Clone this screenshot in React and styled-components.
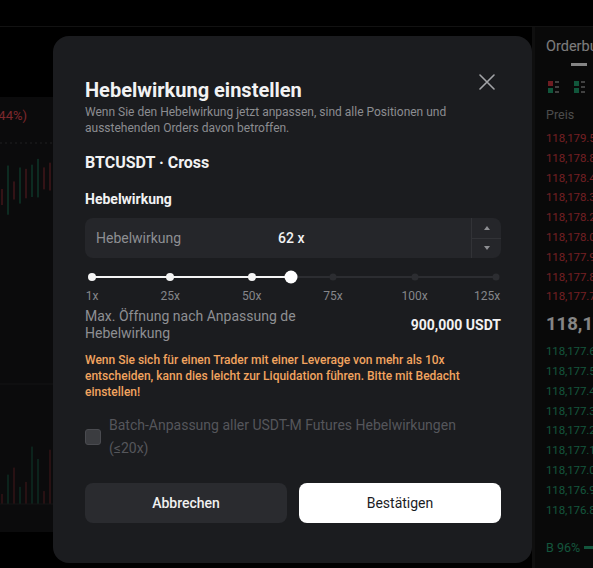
import React from 'react'
import styled, { createGlobalStyle } from 'styled-components'

const GlobalStyle = createGlobalStyle`
  html, body {
    margin: 0;
    padding: 0;
    background: #000;
  }
  body {
    font-family: Roboto, "Noto Sans", "Liberation Sans", sans-serif;
  }
  * {
    box-sizing: border-box;
  }
`

const marks = [1, 25, 50, 75, 100, 125]
const leverage = 62
const pct = v => ((v - 1) / 124) * 100

const asks = [
  '118,179.5',
  '118,178.8',
  '118,178.4',
  '118,178.3',
  '118,178.2',
  '118,178.0',
  '118,177.9',
  '118,177.8',
  '118,177.7'
]
const bids = [
  '118,177.6',
  '118,177.5',
  '118,177.4',
  '118,177.3',
  '118,177.2',
  '118,177.1',
  '118,177.0',
  '118,176.9',
  '118,176.8'
]

// simple deterministic candles for the chart behind the dialog
const candles = Array.from({ length: 90 }, (_, i) => {
  const s = Math.sin(i * 12.9898) * 43758.5453
  const r = s - Math.floor(s)
  const base = 200 - Math.sin(i / 6) * 18 - i * 0.2
  return {
    x: 2 + i * 6,
    top: base - 10 - r * 22,
    bottom: base + 6 + r * 14,
    up: r > 0.45,
    vol: 10 + ((r * 97) % 1) * 48
  }
})

const Chart = () => (
  <svg width="532" height="434" viewBox="0 0 532 434">
    <line x1="0" y1="46" x2="532" y2="46" stroke="#3a3a3a" strokeDasharray="2 3" />
    {candles.map((c, i) => (
      <g key={i}>
        <line
          x1={c.x}
          x2={c.x}
          y1={c.top - 98}
          y2={c.bottom - 98}
          stroke={c.up ? '#1f8a64' : '#a8353c'}
          strokeWidth="1"
        />
        <line
          x1={c.x}
          x2={c.x}
          y1={407 - c.vol}
          y2={407}
          stroke={c.up ? '#1a6e50' : '#7e2a30'}
          strokeWidth="1"
        />
      </g>
    ))}
    <line x1="0" y1="287" x2="532" y2="287" stroke="#262626" />
    <line x1="0" y1="407" x2="532" y2="407" stroke="#262626" />
  </svg>
)

const BookIcon = ({ mixed }) => (
  <svg width="11" height="12" viewBox="0 0 11 12">
    <rect x="0" y="0" width="5" height="5" fill={mixed ? '#c9363e' : '#1f9d6c'} />
    <rect x="0" y="7" width="5" height="5" fill="#1f9d6c" />
    <rect x="7" y="0" width="4" height="2" fill="#777" />
    <rect x="7" y="5" width="4" height="2" fill="#777" />
    <rect x="7" y="10" width="4" height="2" fill="#777" />
  </svg>
)

const CloseIcon = () => (
  <svg width="16" height="16" viewBox="0 0 16 16">
    <path d="M1 1 L15 15 M15 1 L1 15" stroke="#a3a4a7" strokeWidth="1.6" strokeLinecap="round" />
  </svg>
)

const Arrow = ({ down }) => (
  <svg width="6" height="4" viewBox="0 0 6 4">
    <path d={down ? 'M0 0 L6 0 L3 4 Z' : 'M0 4 L6 4 L3 0 Z'} fill="#8d8e92" />
  </svg>
)

export default function App() {
  return (
    <Page>
      <GlobalStyle />
      <TopBar />
      <Main>
        <ChartArea>
          <ChartToolbar />
          <ChartBody>
            <ChangeText>+518.2 (+0.44%)</ChangeText>
            <Chart />
          </ChartBody>
        </ChartArea>
        <OrderBook>
          <BookTitle>Orderbuch</BookTitle>
          <TabLine />
          <BookIcons>
            <BookIcon mixed />
            <BookIcon />
          </BookIcons>
          <BookHead>Preis</BookHead>
          {asks.map(p => (
            <BookRow key={p} side="ask">
              {p}
            </BookRow>
          ))}
          <LastPrice>118,177.6</LastPrice>
          {bids.map(p => (
            <BookRow key={p} side="bid">
              {p}
            </BookRow>
          ))}
          <Ratio>
            B 96%
            <RatioBar />
          </Ratio>
        </OrderBook>
      </Main>

      <Overlay>
        <Modal>
          <Header>
            <Title>Hebelwirkung einstellen</Title>
            <CloseButton>
              <CloseIcon />
            </CloseButton>
          </Header>
          <Subtitle>
            Wenn Sie den Hebelwirkung jetzt anpassen, sind alle Positionen und
            ausstehenden Orders davon betroffen.
          </Subtitle>
          <Symbol>BTCUSDT · Cross</Symbol>
          <FieldLabel>Hebelwirkung</FieldLabel>
          <InputBox>
            <InputLabel>Hebelwirkung</InputLabel>
            <InputValue>{leverage} x</InputValue>
            <Stepper>
              <StepButton>
                <Arrow />
              </StepButton>
              <StepButton>
                <Arrow down />
              </StepButton>
            </Stepper>
          </InputBox>

          <Slider>
            <Track>
              <TrackFill style={{ width: `${pct(leverage)}%` }} />
              {marks.map(m => (
                <Dot key={m} active={m <= leverage} style={{ left: `${pct(m)}%` }} />
              ))}
              <Thumb style={{ left: `${pct(leverage)}%` }} />
            </Track>
          </Slider>
          <MarkLabels>
            {marks.map((m, i) => (
              <MarkLabel key={m} last={i === marks.length - 1} style={{ left: `${pct(m)}%` }}>
                {m}x
              </MarkLabel>
            ))}
          </MarkLabels>

          <MaxRow>
            <MaxLabel>Max. Öffnung nach Anpassung de Hebelwirkung</MaxLabel>
            <MaxValue>900,000 USDT</MaxValue>
          </MaxRow>

          <Warning>
            Wenn Sie sich für einen Trader mit einer Leverage von mehr als 10x
            entscheiden, kann dies leicht zur Liquidation führen. Bitte mit Bedacht
            einstellen!
          </Warning>

          <CheckRow>
            <CheckBox />
            <CheckLabel>Batch-Anpassung aller USDT-M Futures Hebelwirkungen (≤20x)</CheckLabel>
          </CheckRow>

          <Buttons>
            <Button>Abbrechen</Button>
            <Button primary>Bestätigen</Button>
          </Buttons>
        </Modal>
      </Overlay>
    </Page>
  )
}

const Page = styled.div`
  position: relative;
  width: 593px;
  height: 568px;
  overflow: hidden;
  background: #000;
`

const TopBar = styled.div`
  height: 27px;
  border-bottom: 1px solid #222;
  background: #000;
`

const Main = styled.div`
  display: flex;
  height: 505px;
`

const ChartArea = styled.div`
  width: 532px;
  display: flex;
  flex-direction: column;
`

const ChartToolbar = styled.div`
  height: 70px;
  background: #000;
`

const ChartBody = styled.div`
  position: relative;
  flex: 1;
  background: #141416;
  overflow: hidden;
  svg {
    display: block;
  }
`

const ChangeText = styled.div`
  position: absolute;
  right: 505px;
  top: 11px;
  white-space: nowrap;
  font-size: 13px;
  color: #e04a53;
`

const OrderBook = styled.div`
  flex: 1;
  height: 541px;
  border-left: 3px solid #1d1d1d;
  background: #121212;
  padding: 10px 0 0 11px;
  font-size: 11.5px;
  white-space: nowrap;
  overflow: hidden;
`

const BookTitle = styled.div`
  font-size: 14.5px;
  line-height: 20px;
  color: #e2e2e2;
`

const TabLine = styled.div`
  width: 16px;
  height: 3px;
  margin: 6px 0 0 25px;
  background: #f0f0f0;
`

const BookIcons = styled.div`
  display: flex;
  gap: 15px;
  margin-top: 15px;
  padding-left: 2px;
`

const BookHead = styled.div`
  margin-top: 14px;
  line-height: 16px;
  font-size: 12.5px;
  color: #8a8a8a;
`

const BookRow = styled.div`
  line-height: 19.8px;
  letter-spacing: -0.1px;
  color: ${p => (p.side === 'ask' ? '#d13a41' : '#249b6d')};
  &:nth-of-type(5) {
    margin-top: 6px;
  }
`

const LastPrice = styled.div`
  margin: 6px 0 6px;
  font-size: 18.5px;
  font-weight: 700;
  line-height: 23px;
  color: #f2f2f2;
`

const Ratio = styled.div`
  display: flex;
  align-items: center;
  gap: 4px;
  margin-top: 20px;
  color: #249b6d;
  font-size: 12.5px;
`

const RatioBar = styled.div`
  width: 40px;
  height: 3px;
  background: #249b6d;
`

const Overlay = styled.div`
  position: absolute;
  inset: 0;
  background: rgba(0, 0, 0, 0.45);
  padding: 36px 0 0 53px;
`

const Modal = styled.div`
  width: 479px;
  height: 527px;
  padding: 42px 31px 0 32px;
  background: #1b1c1f;
  border-radius: 16px;
  color: #f0f0f0;
`

const Header = styled.div`
  display: flex;
  align-items: flex-start;
  justify-content: space-between;
`

const Title = styled.h2`
  margin: 0;
  font-size: 20px;
  line-height: 24px;
  font-weight: 700;
  color: #f2f2f3;
`

const CloseButton = styled.div`
  width: 24px;
  height: 24px;
  margin: -8px 2px 0 0;
  display: flex;
  align-items: center;
  justify-content: center;
`

const Subtitle = styled.p`
  margin: 2px 0 0;
  font-size: 12px;
  line-height: 16px;
  color: #8c8d91;
`

const Symbol = styled.div`
  margin-top: 16px;
  font-size: 16px;
  line-height: 22px;
  font-weight: 700;
  color: #f2f2f3;
`

const FieldLabel = styled.div`
  margin-top: 15px;
  font-size: 14px;
  line-height: 20px;
  font-weight: 700;
  color: #f2f2f3;
`

const InputBox = styled.div`
  display: flex;
  align-items: center;
  height: 40px;
  margin-top: 9px;
  padding-left: 11px;
  background: #25262a;
  border-radius: 8px;
  overflow: hidden;
`

const InputLabel = styled.div`
  width: 182px;
  font-size: 14px;
  color: #8e8f93;
`

const InputValue = styled.div`
  flex: 1;
  font-size: 14px;
  font-weight: 500;
  color: #f2f2f3;
`

const Stepper = styled.div`
  width: 30px;
  height: 100%;
  display: flex;
  flex-direction: column;
  border-left: 1px solid #323337;
`

const StepButton = styled.div`
  flex: 1;
  display: flex;
  align-items: center;
  justify-content: center;
  & + & {
    border-top: 1px solid #323337;
  }
`

const Slider = styled.div`
  height: 22px;
  margin-top: 8px;
  padding: 0 5px 0 7px;
  display: flex;
  align-items: center;
`

const Track = styled.div`
  position: relative;
  flex: 1;
  height: 2px;
  background: #2c2d31;
`

const TrackFill = styled.div`
  height: 100%;
  background: #f4f4f4;
`

const Dot = styled.div`
  position: absolute;
  top: 50%;
  width: ${p => (p.active ? 8 : 7)}px;
  height: ${p => (p.active ? 8 : 7)}px;
  border-radius: 50%;
  transform: translate(-50%, -50%);
  background: ${p => (p.active ? '#f4f4f4' : '#2c2d31')};
`

const Thumb = styled.div`
  position: absolute;
  top: 50%;
  width: 13px;
  height: 13px;
  border-radius: 50%;
  transform: translate(-50%, -50%);
  background: #ffffff;
`

const MarkLabels = styled.div`
  position: relative;
  height: 16px;
  margin: 0 5px 0 7px;
`

const MarkLabel = styled.span`
  position: absolute;
  top: 0;
  font-size: 12px;
  line-height: 16px;
  color: #85868a;
  transform: translateX(${p => (p.last ? '-84%' : '-50%')});
`

const MaxRow = styled.div`
  display: flex;
  align-items: center;
  justify-content: space-between;
  margin-top: 4px;
`

const MaxLabel = styled.div`
  max-width: 272px;
  font-size: 14px;
  line-height: 17px;
  color: #8e8f93;
`

const MaxValue = styled.div`
  font-size: 14px;
  font-weight: 700;
  color: #f2f2f3;
`

const Warning = styled.p`
  margin: 10px 0 0;
  font-size: 12px;
  line-height: 16px;
  font-weight: 500;
  color: #f2a45f;
`

const CheckRow = styled.div`
  display: flex;
  align-items: center;
  gap: 8px;
  margin-top: 14px;
`

const CheckBox = styled.div`
  flex: none;
  width: 16px;
  height: 16px;
  border-radius: 3px;
  background: #3b3c40;
  border: 1px solid #4a4b50;
`

const CheckLabel = styled.div`
  max-width: 380px;
  font-size: 14px;
  line-height: 23px;
  color: #55565b;
`

const Buttons = styled.div`
  display: grid;
  grid-template-columns: 1fr 1fr;
  gap: 12px;
  margin-top: 23px;
`

const Button = styled.div`
  height: 40px;
  display: flex;
  align-items: center;
  justify-content: center;
  border-radius: 8px;
  font-size: 14px;
  font-weight: ${p => (p.primary ? 400 : 500)};
  background: ${p => (p.primary ? '#ffffff' : '#2a2b2f')};
  color: ${p => (p.primary ? '#1b1c1f' : '#f0f0f0')};
`
